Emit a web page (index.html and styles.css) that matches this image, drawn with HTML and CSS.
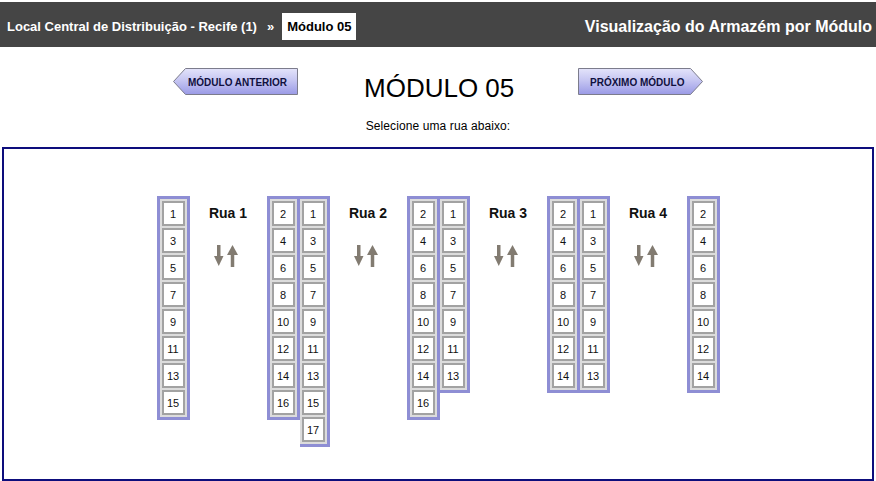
FILE: index.html
```html
<!DOCTYPE html>
<html lang="pt-BR">
<head>
<meta charset="utf-8">
<title>Visualização do Armazém por Módulo</title>
<link rel="stylesheet" href="styles.css">
</head>
<body>
<div class="topbar">
  <div class="crumbs">
    <span class="crumb">Local Central de Distribuição - Recife (1)</span>
    <span class="sep">»</span>
    <span class="current">Módulo 05</span>
  </div>
  <div class="title">Visualização do Armazém por Módulo</div>
</div>

<div class="nav">
  <a class="btn prev">
    <svg class="btn-shape" width="125" height="27" viewBox="0 0 125 27">
      <defs>
        <linearGradient id="g1" x1="0" y1="0" x2="0" y2="1">
          <stop offset="0" stop-color="#e4e4fa"/>
          <stop offset="0.45" stop-color="#c6c6f2"/>
          <stop offset="1" stop-color="#9a9ae6"/>
        </linearGradient>
      </defs>
      <polygon points="12.5,0.5 124.5,0.5 124.5,26.5 12.5,26.5 0.5,13.5" fill="url(#g1)" stroke="#7c7c8c"/>
    </svg>
    <span class="btn-label">MÓDULO ANTERIOR</span>
  </a>
  <h1 class="heading">MÓDULO 05</h1>
  <a class="btn next">
    <svg class="btn-shape" width="125" height="27" viewBox="0 0 125 27">
      <defs>
        <linearGradient id="g2" x1="0" y1="0" x2="0" y2="1">
          <stop offset="0" stop-color="#e4e4fa"/>
          <stop offset="0.45" stop-color="#c6c6f2"/>
          <stop offset="1" stop-color="#9a9ae6"/>
        </linearGradient>
      </defs>
      <polygon points="0.5,0.5 112.5,0.5 124.5,13.5 112.5,26.5 0.5,26.5" fill="url(#g2)" stroke="#7c7c8c"/>
    </svg>
    <span class="btn-label">PRÓXIMO MÓDULO</span>
  </a>
</div>

<p class="hint">Selecione uma rua abaixo:</p>

<div class="panel">
  <div class="streets">
    <div class="col">
      <div class="cell">1</div><div class="cell">3</div><div class="cell">5</div><div class="cell">7</div><div class="cell">9</div><div class="cell">11</div><div class="cell">13</div><div class="cell">15</div>
    </div>
    <div class="rua">
      <div class="rua-name">Rua 1</div>
      <svg class="swap" width="25" height="22" viewBox="0 0 25 22"><rect x="3" y="0" width="3.5" height="12" fill="#827b71"/><polygon points="0,11 9.5,11 4.75,21" fill="#827b71"/><polygon points="18.5,0 24,10 13,10" fill="#827b71"/><rect x="16.75" y="9" width="3.5" height="13" fill="#827b71"/></svg>
    </div>
    <div class="pair">
      <div class="col">
        <div class="cell">2</div><div class="cell">4</div><div class="cell">6</div><div class="cell">8</div><div class="cell">10</div><div class="cell">12</div><div class="cell">14</div><div class="cell">16</div>
      </div>
      <div class="col join">
        <div class="cell">1</div><div class="cell">3</div><div class="cell">5</div><div class="cell">7</div><div class="cell">9</div><div class="cell">11</div><div class="cell">13</div><div class="cell">15</div><div class="cell">17</div>
      </div>
    </div>
    <div class="rua">
      <div class="rua-name">Rua 2</div>
      <svg class="swap" width="25" height="22" viewBox="0 0 25 22"><rect x="3" y="0" width="3.5" height="12" fill="#827b71"/><polygon points="0,11 9.5,11 4.75,21" fill="#827b71"/><polygon points="18.5,0 24,10 13,10" fill="#827b71"/><rect x="16.75" y="9" width="3.5" height="13" fill="#827b71"/></svg>
    </div>
    <div class="pair">
      <div class="col">
        <div class="cell">2</div><div class="cell">4</div><div class="cell">6</div><div class="cell">8</div><div class="cell">10</div><div class="cell">12</div><div class="cell">14</div><div class="cell">16</div>
      </div>
      <div class="col join">
        <div class="cell">1</div><div class="cell">3</div><div class="cell">5</div><div class="cell">7</div><div class="cell">9</div><div class="cell">11</div><div class="cell">13</div>
      </div>
    </div>
    <div class="rua">
      <div class="rua-name">Rua 3</div>
      <svg class="swap" width="25" height="22" viewBox="0 0 25 22"><rect x="3" y="0" width="3.5" height="12" fill="#827b71"/><polygon points="0,11 9.5,11 4.75,21" fill="#827b71"/><polygon points="18.5,0 24,10 13,10" fill="#827b71"/><rect x="16.75" y="9" width="3.5" height="13" fill="#827b71"/></svg>
    </div>
    <div class="pair">
      <div class="col">
        <div class="cell">2</div><div class="cell">4</div><div class="cell">6</div><div class="cell">8</div><div class="cell">10</div><div class="cell">12</div><div class="cell">14</div>
      </div>
      <div class="col join">
        <div class="cell">1</div><div class="cell">3</div><div class="cell">5</div><div class="cell">7</div><div class="cell">9</div><div class="cell">11</div><div class="cell">13</div>
      </div>
    </div>
    <div class="rua">
      <div class="rua-name">Rua 4</div>
      <svg class="swap" width="25" height="22" viewBox="0 0 25 22"><rect x="3" y="0" width="3.5" height="12" fill="#827b71"/><polygon points="0,11 9.5,11 4.75,21" fill="#827b71"/><polygon points="18.5,0 24,10 13,10" fill="#827b71"/><rect x="16.75" y="9" width="3.5" height="13" fill="#827b71"/></svg>
    </div>
    <div class="col">
      <div class="cell">2</div><div class="cell">4</div><div class="cell">6</div><div class="cell">8</div><div class="cell">10</div><div class="cell">12</div><div class="cell">14</div>
    </div>
  </div>
</div>
</body>
</html>
```

FILE: styles.css
```css
* { box-sizing: border-box; }

body {
  margin: 0;
  padding-top: 2px;
  background: #ffffff;
  font-family: "Liberation Sans", Arial, sans-serif;
  color: #000;
}

.topbar {
  height: 45px;
  background: #454545;
  display: flex;
  justify-content: space-between;
  align-items: center;
  padding-top: 4px;
}

.crumbs {
  display: flex;
  align-items: center;
  padding-left: 7px;
  font-size: 13px;
  font-weight: bold;
  color: #fff;
}

.crumb { line-height: 16px; }

.sep {
  margin: 0 8px 0 10px;
  line-height: 16px;
}

.current {
  background: #fff;
  color: #000;
  height: 27px;
  line-height: 27px;
  padding: 0 5px;
}

.title {
  padding-right: 4px;
  font-size: 16px;
  line-height: 18px;
  font-weight: bold;
  color: #fff;
}

.nav {
  display: flex;
  justify-content: center;
  align-items: flex-start;
  gap: 66px;
  margin-top: 21px;
}

.btn {
  position: relative;
  display: flex;
  width: 125px;
  height: 27px;
  padding-top: 3px;
  align-items: center;
  font-size: 10px;
  font-weight: bold;
  color: #101040;
  cursor: pointer;
}

.btn-shape {
  position: absolute;
  left: 0;
  top: 0;
}

.btn-label {
  position: relative;
  line-height: 12px;
}

.prev { padding-left: 15px; }
.next { padding-left: 12px; }

.heading {
  margin: 5px 0 0 0;
  width: 148px;
  text-align: center;
  font-size: 26px;
  line-height: 30px;
  font-weight: normal;
  white-space: nowrap;
}

.hint {
  margin: 16px 0 0 0;
  text-align: center;
  font-size: 12px;
  line-height: 14px;
  letter-spacing: 0.1px;
}

.panel {
  margin: 14px 2px 0 2px;
  height: 334px;
  border: 2px solid #0d0d7c;
  padding-top: 47px;
}

.streets {
  display: flex;
  justify-content: center;
  align-items: flex-start;
}

.pair {
  display: flex;
  align-items: flex-start;
}

.col {
  width: 33px;
  border: 3px solid #8e8ed4;
  background: #dcdcdc;
  padding: 2px;
  display: flex;
  flex-direction: column;
  gap: 2px;
}

.col.join {
  width: 30px;
  border-left: 0;
}

.cell {
  width: 23px;
  height: 25px;
  border: 2px solid #a2a2a2;
  background: #fff;
  display: flex;
  align-items: center;
  justify-content: center;
  font-size: 11px;
  color: #111;
}

.rua {
  width: 77px;
  display: flex;
  flex-direction: column;
  align-items: center;
  padding-top: 9px;
}

.rua-name {
  font-size: 14px;
  line-height: 16px;
  font-weight: bold;
  color: #111;
}

.swap {
  display: block;
  margin: 24px 4px 0 0;
}
```
